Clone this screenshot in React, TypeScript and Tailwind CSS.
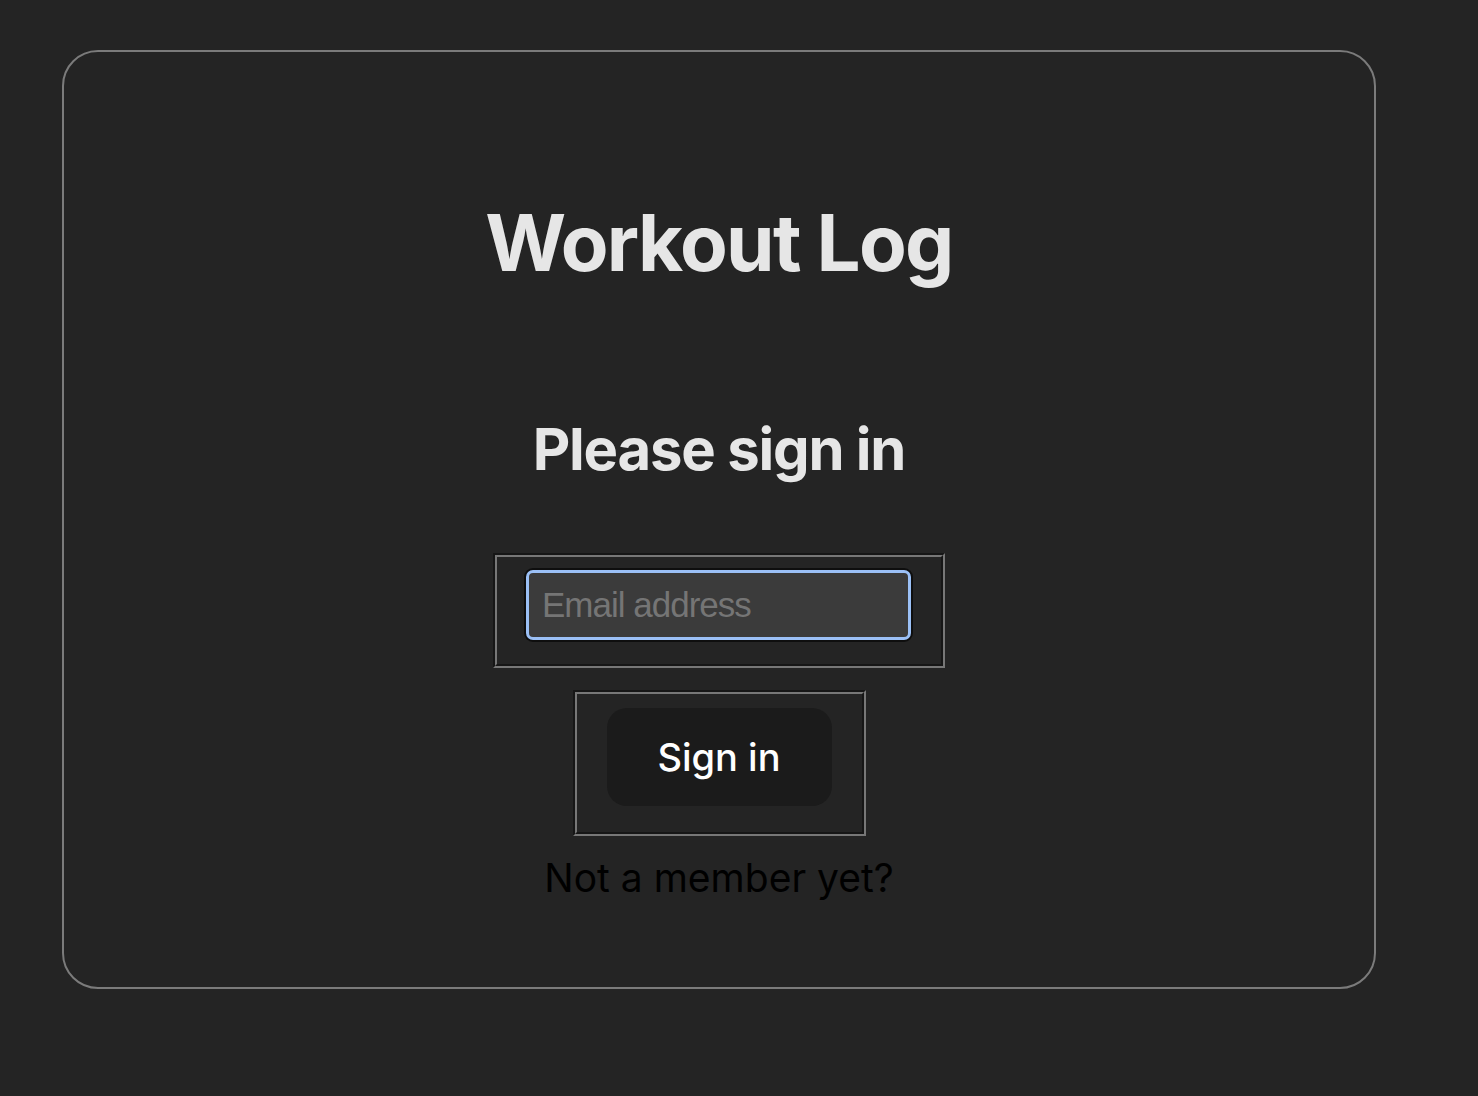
export default function App() {
  return (
    <div className="min-h-screen w-full bg-[#242424] pt-[50px] font-['Inter',sans-serif]">
      <div className="ml-[62px] w-[1314px] h-[939px] rounded-[36px] border-2 border-[#7b7b7b] flex flex-col items-center">
        <h1 className="mt-[152px] text-[78px] leading-none font-bold text-[#e6e6e6] tracking-[-1.7px]">
          Workout Log
        </h1>

        <h2 className="mt-[138px] text-[58px] leading-none font-bold text-[#e6e6e6] tracking-[-1.2px]">
          Please sign in
        </h2>

        <form className="mt-[75px] flex flex-col items-center">
          {/* groove border: outer dark/light, inner light/dark */}
          <div className="w-[452px] border-2 border-t-[#161616] border-l-[#161616] border-b-[#777] border-r-[#777]">
            <div className="border-2 border-t-[#777] border-l-[#777] border-b-[#161616] border-r-[#161616] pl-[27px] pt-[11px] pb-[22px]">
              <div className="w-[389px] rounded-[9px] bg-[#0e0e0e] p-[2px]">
                <input
                  autoFocus
                  type="email"
                  placeholder="Email address"
                  className="w-[385px] h-[70px] rounded-[7px] border-[3px] border-[#9bc0f6] bg-[#3b3b3b] px-[13px] text-[35px] tracking-[-1px] text-white caret-white placeholder:text-[#757575] outline-none font-['Liberation_Sans',Arial,sans-serif]"
                />
              </div>
            </div>
          </div>

          <div className="mt-[22px] w-[293px] border-2 border-t-[#161616] border-l-[#161616] border-b-[#777] border-r-[#777]">
            <div className="border-2 border-t-[#777] border-l-[#777] border-b-[#161616] border-r-[#161616] pl-[30px] pt-[14px] pb-[26px]">
              <button
                type="button"
                className="w-[225px] h-[98px] rounded-[20px] bg-[#1b1b1b] text-[38px] font-medium text-white"
              >
                Sign in
              </button>
            </div>
          </div>

          <p className="mt-[22px] text-[39px] leading-none text-black">Not a member yet?</p>
        </form>
      </div>
    </div>
  );
}
